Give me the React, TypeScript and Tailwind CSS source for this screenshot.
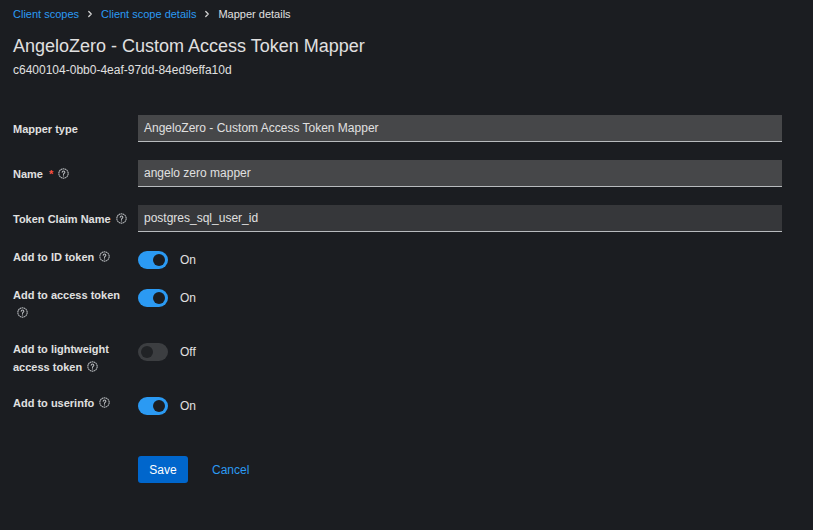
import { ChevronRight } from 'lucide-react';

const HelpIcon = ({ className = '' }: { className?: string }) => (
  <svg
    viewBox="0 0 16 16"
    className={`inline-block size-[11px] align-[-1px] text-[#b8bbbe] ${className}`}
    fill="none"
    stroke="currentColor"
  >
    <circle cx="8" cy="8" r="6.8" strokeWidth="1.5" strokeDasharray="2.4 0.6" />
    <path
      d="M6.1 6.3c0-1.1.85-1.85 1.95-1.85s1.95.7 1.95 1.7c0 1.5-1.95 1.5-1.95 3v.4"
      strokeWidth="1.5"
      strokeLinecap="round"
    />
    <circle cx="8" cy="11.6" r="0.9" fill="currentColor" stroke="none" />
  </svg>
);

const Toggle = ({ on }: { on: boolean }) => (
  <div className="mt-[3px] flex items-center gap-3">
    <div
      className={
        on
          ? 'flex h-[18px] w-[30px] items-center justify-end rounded-full bg-[#2b9af3] px-[3px]'
          : 'flex h-[18px] w-[30px] items-center justify-start rounded-full bg-[#3c3e41] px-[3px]'
      }
    >
      <div className={on ? 'size-3 rounded-full bg-[#1b1d21]' : 'size-3 rounded-full bg-[#212326]'} />
    </div>
    <span className="text-[12px] leading-[18px] text-[#e0e0e0]">{on ? 'On' : 'Off'}</span>
  </div>
);

const TextRow = ({
  label,
  value,
  readOnly,
  required,
  help,
}: {
  label: string;
  value: string;
  readOnly?: boolean;
  required?: boolean;
  help?: boolean;
}) => (
  <div className="flex items-center">
    <div className="w-[125px] shrink-0 text-[11px] font-bold leading-[18px] text-[#e0e0e0]">
      {label}
      {required && <span className="ml-[6px] text-[#fe5142]">*</span>}
      {help && <HelpIcon className="ml-[5px]" />}
    </div>
    <div
      className={
        readOnly
          ? 'flex h-[27px] w-[644px] items-center border-b border-[#b8bbbe] bg-[#464749] px-[6px] text-[12px] text-[#e0e0e0]'
          : 'flex h-[27px] w-[644px] items-center border-b border-[#b8bbbe] bg-[#36373a] px-[6px] text-[12px] text-[#e0e0e0]'
      }
    >
      {value}
    </div>
  </div>
);

export default function App() {
  return (
    <div
      className="min-h-[530px] w-full bg-[#1b1d21] px-[13px] pt-[7px] text-[#e0e0e0]"
      style={{ fontFamily: '"Liberation Sans", Arial, sans-serif' }}
    >
      {/* Breadcrumb */}
      <nav className="flex h-[14px] items-center text-[11px] leading-[14px]">
        <span className="text-[#2b9af3]">Client scopes</span>
        <ChevronRight size={10} strokeWidth={3} className="mx-[6px] text-[#d2d2d2]" />
        <span className="text-[#2b9af3]">Client scope details</span>
        <ChevronRight size={10} strokeWidth={3} className="mx-[6px] text-[#d2d2d2]" />
        <span className="text-[#e0e0e0]">Mapper details</span>
      </nav>

      <h1 className="mt-[14px] text-[18px] leading-[22px] text-[#e0e0e0]">
        AngeloZero - Custom Access Token Mapper
      </h1>
      <div className="mt-[5px] text-[12px] leading-[16px] text-[#e0e0e0]">
        c6400104-0bb0-4eaf-97dd-84ed9effa10d
      </div>

      {/* Form */}
      <div className="mt-[37px] flex flex-col gap-[18px]">
        <TextRow label="Mapper type" value="AngeloZero - Custom Access Token Mapper" readOnly />
        <TextRow label="Name" value="angelo zero mapper" readOnly required help />
        <TextRow label="Token Claim Name" value="postgres_sql_user_id" help />
      </div>

      <div className="mt-[16px] flex flex-col">
        <div className="flex items-start">
          <div className="w-[125px] shrink-0 text-[11px] font-bold leading-[18px]">
            Add to ID token
            <HelpIcon className="ml-[5px]" />
          </div>
          <Toggle on />
        </div>

        <div className="mt-[17px] flex items-start">
          <div className="w-[125px] shrink-0 text-[11px] font-bold leading-[18px]">
            Add to access token
            <br />
            <HelpIcon className="ml-[4px]" />
          </div>
          <Toggle on />
        </div>

        <div className="mt-[18px] flex items-start">
          <div className="w-[125px] shrink-0 text-[11px] font-bold leading-[18px]">
            Add to lightweight
            <br />
            access token
            <HelpIcon className="ml-[5px]" />
          </div>
          <Toggle on={false} />
        </div>

        <div className="mt-[18px] flex items-start">
          <div className="w-[125px] shrink-0 text-[11px] font-bold leading-[18px]">
            Add to userinfo
            <HelpIcon className="ml-[5px]" />
          </div>
          <Toggle on />
        </div>
      </div>

      <div className="mt-[41px] flex items-center pl-[125px]">
        <button className="h-[27px] w-[50px] rounded-[3px] bg-[#0066cc] text-[12px] text-white">Save</button>
        <button className="ml-[24px] text-[12px] text-[#2b9af3]">Cancel</button>
      </div>
    </div>
  );
}
